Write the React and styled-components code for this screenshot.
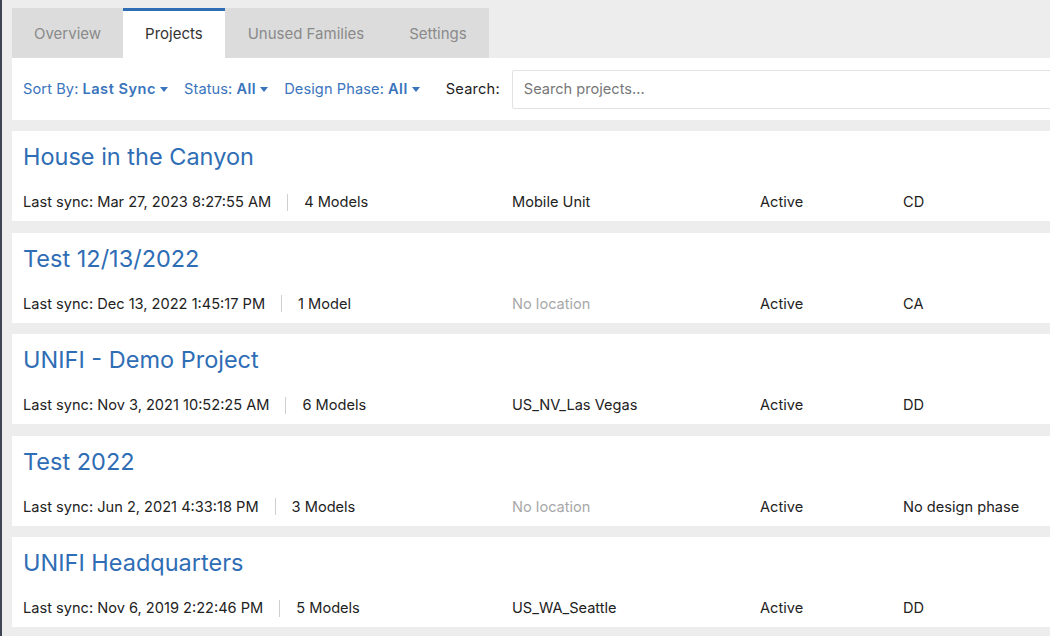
import React from "react";
import styled, { createGlobalStyle } from "styled-components";

const Global = createGlobalStyle`
  html, body { margin: 0; padding: 0; background: #ededed; }
  body { font-family: Inter, "Open Sans", Arial, sans-serif; color: #222; overflow: hidden; }
  * { box-sizing: border-box; }
`;

const Page = styled.div`
  display: flex;
  min-height: 636px;
  width: 1050px;
  overflow: hidden;
`;

const EdgeStrip = styled.div`
  width: 2px;
  flex: none;
  background: #3e4453;
`;

const Main = styled.div`
  flex: 1;
  padding: 8px 0 0 10px;
  display: flex;
  flex-direction: column;
  min-width: 0;
`;

const TabBar = styled.div`
  display: flex;
  align-self: flex-start;
  background: #dcdcdc;
  height: 50px;
`;

const Tab = styled.div`
  height: 50px;
  padding: 0 ${(p) => p.$pad}px;
  display: flex;
  align-items: center;
  font-size: 15px;
  color: ${(p) => (p.$active ? "#333" : "#8a8a8a")};
  background: ${(p) => (p.$active ? "#fff" : "transparent")};
  border-top: 3px solid ${(p) => (p.$active ? "#2f6db5" : "transparent")};
  padding-bottom: 3px;
`;

const FilterBar = styled.div`
  background: #fff;
  height: 62px;
  display: flex;
  align-items: center;
  padding-left: 11px;
  margin-right: -40px;
`;

const Filter = styled.div`
  color: #3a74bd;
  font-size: 14.6px;
  letter-spacing: 0.1px;
  margin-right: 16px;
  display: flex;
  align-items: center;
  white-space: nowrap;
  b { font-weight: 600; margin-left: 4px; letter-spacing: 0.5px; }
`;

const Caret = styled.span`
  display: inline-block;
  width: 0;
  height: 0;
  margin-left: 4px;
  border-left: 4.5px solid transparent;
  border-right: 4.5px solid transparent;
  border-top: 5px solid #3a74bd;
`;

const SearchLabel = styled.span`
  font-size: 14.6px;
  color: #222;
  margin-left: 10px;
  margin-right: 12px;
  letter-spacing: 0.2px;
`;

const SearchInput = styled.input`
  flex: 1;
  height: 39px;
  border: 1px solid #e3e3e3;
  border-radius: 2px;
  padding: 0 11px;
  font-family: inherit;
  font-size: 14.6px;
  color: #222;
  outline: none;
  &::placeholder { color: #777; }
`;

const List = styled.div`
  display: flex;
  flex-direction: column;
  gap: 11.5px;
  margin-top: 11px;
`;

const Card = styled.div`
  background: #fff;
  height: 90px;
  padding: 12px 11px 0;
`;

const Title = styled.div`
  font-size: 23.5px;
  color: #2f6db5;
  line-height: 28px;
`;

const Meta = styled.div`
  display: grid;
  grid-template-columns: 489px 248px 143px auto;
  margin-top: 22px;
  font-size: 14.6px;
  line-height: 18px;
  color: #222;
  white-space: nowrap;
`;

const SyncGroup = styled.div`
  display: flex;
  align-items: center;
`;

const Divider = styled.span`
  width: 1px;
  height: 17px;
  background: #cfcfcf;
  margin: 0 ${(p) => p.$gap}px;
`;

const Cell = styled.div`
  color: ${(p) => (p.$muted ? "#a8a8a8" : "#222")};
`;

const projects = [
  { name: "House in the Canyon", sync: "Mar 27, 2023 8:27:55 AM", models: "4 Models", loc: "Mobile Unit", status: "Active", phase: "CD" },
  { name: "Test 12/13/2022", sync: "Dec 13, 2022 1:45:17 PM", models: "1 Model", loc: null, status: "Active", phase: "CA" },
  { name: "UNIFI - Demo Project", sync: "Nov 3, 2021 10:52:25 AM", models: "6 Models", loc: "US_NV_Las Vegas", status: "Active", phase: "DD" },
  { name: "Test 2022", sync: "Jun 2, 2021 4:33:18 PM", models: "3 Models", loc: null, status: "Active", phase: "No design phase" },
  { name: "UNIFI Headquarters", sync: "Nov 6, 2019 2:22:46 PM", models: "5 Models", loc: "US_WA_Seattle", status: "Active", phase: "DD" },
];

export default function App() {
  return (
    <>
      <Global />
      <Page>
        <EdgeStrip />
        <Main>
          <TabBar>
            <Tab $pad={22}>Overview</Tab>
            <Tab $pad={22} $active>Projects</Tab>
            <Tab $pad={23}>Unused Families</Tab>
            <Tab $pad={22}>Settings</Tab>
          </TabBar>
          <FilterBar>
            <Filter>Sort By:<b>Last Sync</b><Caret /></Filter>
            <Filter>Status:<b>All</b><Caret /></Filter>
            <Filter>Design Phase:<b>All</b><Caret /></Filter>
            <SearchLabel>Search:</SearchLabel>
            <SearchInput placeholder="Search projects..." />
          </FilterBar>
          <List>
            {projects.map((p) => (
              <Card key={p.name}>
                <Title>{p.name}</Title>
                <Meta>
                  <SyncGroup>
                    <span>Last sync: {p.sync}</span>
                    <Divider $gap={16} />
                    <span>{p.models}</span>
                  </SyncGroup>
                  <Cell $muted={!p.loc}>{p.loc || "No location"}</Cell>
                  <Cell>{p.status}</Cell>
                  <Cell>{p.phase}</Cell>
                </Meta>
              </Card>
            ))}
          </List>
        </Main>
      </Page>
    </>
  );
}
